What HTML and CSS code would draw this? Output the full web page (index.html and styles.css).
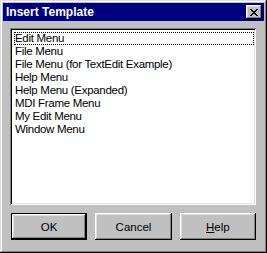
FILE: index.html
```html
<!DOCTYPE html>
<html>
<head>
<meta charset="utf-8">
<link rel="stylesheet" href="styles.css">
</head>
<body>
<div class="window">
  <div class="titlebar">
    <span class="title">Insert Template</span>
    <div class="close">
      <svg width="8" height="7" viewBox="0 0 8 7"><path d="M0 0h2v1h-2zM6 0h2v1h-2zM1 1h2v1h-2zM5 1h2v1h-2zM2 2h4v1h-4zM3 3h2v1h-2zM2 4h4v1h-4zM1 5h2v1h-2zM5 5h2v1h-2zM0 6h2v1h-2zM6 6h2v1h-2z" fill="#000"/></svg>
    </div>
  </div>
  <div class="body">
    <div class="listbox">
      <div class="item focus">Edit Menu</div>
      <div class="item">File Menu</div>
      <div class="item">File Menu (for TextEdit Example)</div>
      <div class="item">Help Menu</div>
      <div class="item">Help Menu (Expanded)</div>
      <div class="item">MDI Frame Menu</div>
      <div class="item">My Edit Menu</div>
      <div class="item">Window Menu</div>
    </div>
    <div class="buttons">
      <div class="btn default"><span>OK</span></div>
      <div class="btn"><span>Cancel</span></div>
      <div class="btn"><span><u>H</u>elp</span></div>
    </div>
  </div>
</div>
</body>
</html>
```
FILE: styles.css
```css
html, body {
  margin: 0;
  padding: 0;
  background: #c0c0c0;
}
.window {
  width: 267px;
  height: 253px;
  box-sizing: border-box;
  background: #c0c0c0;
  padding: 3px;
  box-shadow: inset -1px -1px #000, inset 1px 1px #dfdfdf, inset -2px -2px #808080, inset 2px 2px #fff;
  font-family: "Liberation Sans", Arial, sans-serif;
  font-size: 11.5px;
  display: flex;
  flex-direction: column;
}
.titlebar {
  height: 18px;
  background: #000080;
  display: flex;
  align-items: center;
  justify-content: space-between;
  padding: 0 2px 0 3px;
}
.title {
  color: #fff;
  font-weight: bold;
  font-size: 12px;
}
.close {
  width: 16px;
  height: 14px;
  box-sizing: border-box;
  background: #c0c0c0;
  box-shadow: inset -1px -1px #000, inset 1px 1px #fff, inset -2px -2px #808080, inset 2px 2px #dfdfdf;
  display: flex;
  align-items: center;
  justify-content: center;
  padding-right: 1px;
}
.body {
  flex: 1;
  display: flex;
  flex-direction: column;
  padding: 7px 8px 0 7px;
}
.listbox {
  height: 177px;
  box-sizing: border-box;
  background: #fff;
  padding: 4px 2px 2px 4px;
  box-shadow: inset 1px 1px #808080, inset -1px -1px #fff, inset 2px 2px #000, inset -2px -2px #dfdfdf;
}
.item {
  height: 13px;
  line-height: 13px;
  padding-left: 1px;
  color: #000;
  white-space: nowrap;
  box-sizing: border-box;
  letter-spacing: -0.3px;
}
.item.focus {
  outline: 1px dotted #000;
  outline-offset: -1px;
}
.buttons {
  display: flex;
  gap: 8px;
  margin-top: 8px;
  padding-left: 1px;
}
.btn {
  width: 77px;
  height: 27px;
  box-sizing: border-box;
  background: #c0c0c0;
  box-shadow: inset -1px -1px #000, inset 1px 1px #fff, inset -2px -2px #808080, inset 2px 2px #dfdfdf;
  display: flex;
  align-items: center;
  justify-content: center;
  color: #000;
}
.btn.default {
  box-shadow: inset 0 0 0 1px #000, inset -2px -2px #000, inset 2px 2px #fff, inset -3px -3px #808080, inset 3px 3px #dfdfdf;
}
```
